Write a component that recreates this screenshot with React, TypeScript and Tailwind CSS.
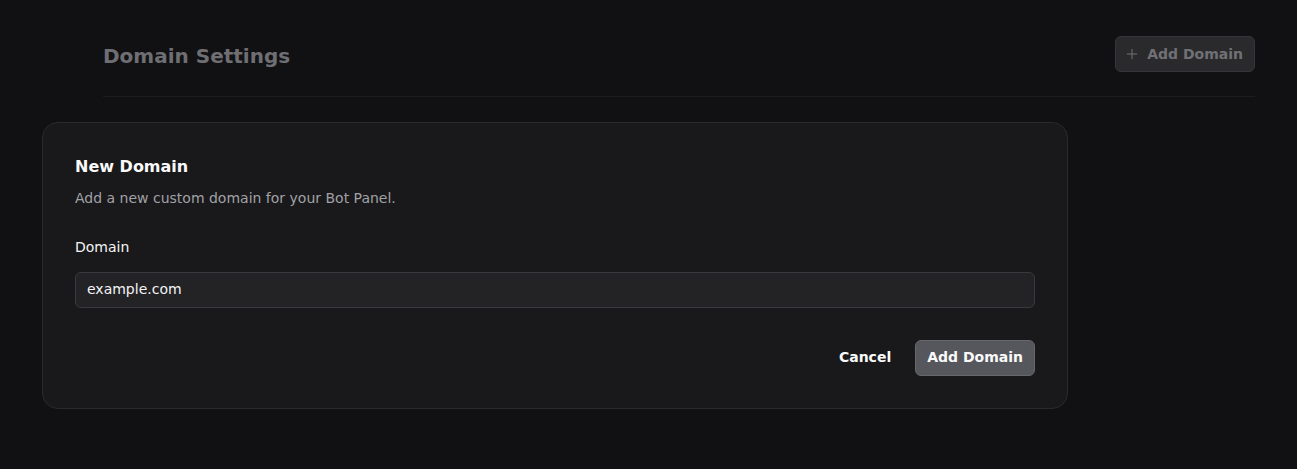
import { Plus } from "lucide-react";

export default function App() {
  return (
    <div
      className="min-h-[469px] w-full bg-[#111113] text-white"
      style={{ fontFamily: '"DejaVu Sans", sans-serif' }}
    >
      {/* dimmed page behind the dialog */}
      <div className="px-[42px] pt-[36px]">
        <div className="ml-[61px] flex items-start justify-between border-b border-[#1c1c1f] pb-[24px]">
          <h1 className="pt-[6px] text-xl leading-7 font-bold text-[#6e6e73]">Domain Settings</h1>
          <button className="flex h-9 items-center gap-[7px] rounded-md border border-[#36363a] bg-[#2a2a2d] pr-[11px] pl-[8px] text-sm font-bold text-[#707075]">
            <Plus className="h-4 w-4" strokeWidth={1.5} />
            Add Domain
          </button>
        </div>

        <div className="mt-[25px] w-[1026px] rounded-2xl border border-[#2a2a2d] bg-[#19191b] p-8">
          <h2 className="text-base leading-6 font-bold text-[#fafafa]">New Domain</h2>
          <p className="mt-[9px] text-sm leading-5 text-[#a1a1a6]">Add a new custom domain for your Bot Panel.</p>

          <label className="mt-[29px] block text-sm leading-5 text-[#f4f4f5]">Domain</label>
          <div className="mt-[15px] flex h-9 items-center rounded-md border border-[#3a3a3e] bg-[#232326] px-[11px] pb-[2px] text-sm text-[#f4f4f5]">
            example.com
          </div>

          <div className="mt-8 flex items-center justify-end gap-2">
            <button className="h-9 px-4 pb-[2px] text-sm font-bold text-[#fafafa]">Cancel</button>
            <button className="h-9 rounded-md border border-[#66666d] bg-[#56565d] px-[11px] pb-[2px] text-sm font-bold text-[#fafafa]">
              Add Domain
            </button>
          </div>
        </div>
      </div>
    </div>
  );
}
